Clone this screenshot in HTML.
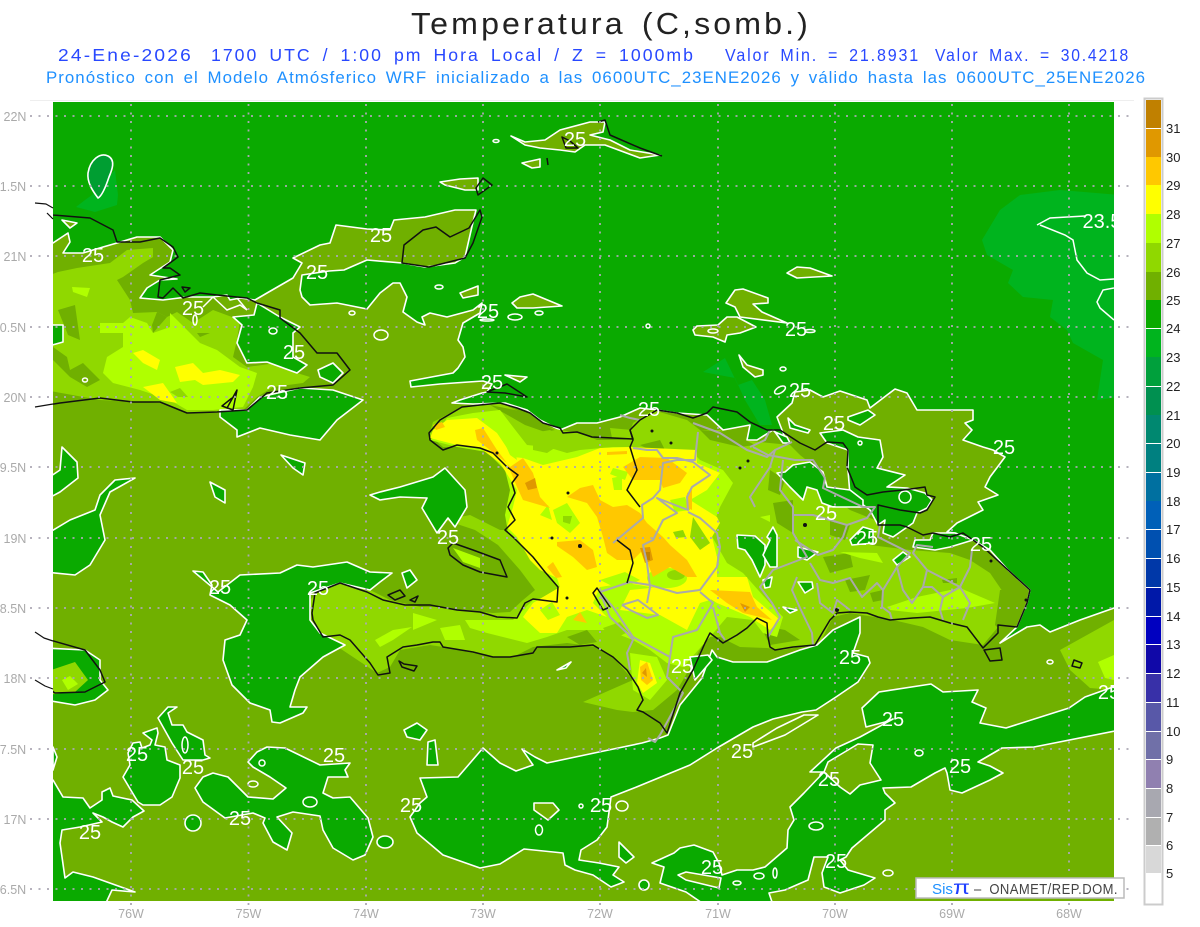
<!DOCTYPE html>
<html lang="es"><head><meta charset="utf-8"><title>Temperatura</title>
<style>
html,body{margin:0;padding:0;background:#fff}
svg{display:block;font-family:"Liberation Sans",sans-serif}
.o{fill:#70b000;stroke:#fff;stroke-width:1.6;stroke-linejoin:round}
.g{fill:#0aaa00;stroke:#fff;stroke-width:1.6;stroke-linejoin:round}
.r{fill:none;stroke:#fff;stroke-width:1.5}
.a{fill:#90d800}.b{fill:#b0ff00}.c{fill:#ffff00}.d{fill:#ffc800}.e{fill:#e09800}.f{fill:#c08000}.q{fill:#70b000}
.k{fill:none;stroke:#111;stroke-width:1.5;stroke-linejoin:round}
.y{fill:none;stroke:#aaa;stroke-width:2;stroke-linejoin:round}
.l text{fill:#fff;font-size:20px;text-anchor:middle}
.t text{fill:#aaa;font-size:12.5px;text-anchor:middle}
.n text{fill:#222;font-size:13px}
</style></head><body>
<svg width="1200" height="927" viewBox="0 0 1200 927" xmlns="http://www.w3.org/2000/svg">
<defs><clipPath id="m"><rect x="53" y="102" width="1061" height="799"/></clipPath></defs>
<rect width="1200" height="927" fill="#fff"/>
<text x="411" y="34" font-size="31" fill="#222" letter-spacing="3" word-spacing="4" textLength="400" lengthAdjust="spacingAndGlyphs">Temperatura (C,somb.)</text>
<g fill="#2848ff" font-size="17.5" letter-spacing="2" word-spacing="4">
<text x="58" y="61" textLength="135" lengthAdjust="spacingAndGlyphs">24-Ene-2026</text>
<text x="211" y="61" textLength="484" lengthAdjust="spacingAndGlyphs">1700 UTC / 1:00 pm Hora Local / Z = 1000mb</text>
<text x="725" y="61" textLength="195" lengthAdjust="spacingAndGlyphs">Valor Min. = 21.8931</text>
<text x="935" y="61" textLength="195" lengthAdjust="spacingAndGlyphs">Valor Max. = 30.4218</text>
</g>
<text x="46" y="83" font-size="16.5" fill="#1e90ff" letter-spacing="1" word-spacing="3" textLength="1100" lengthAdjust="spacingAndGlyphs">Pronóstico con el Modelo Atmósferico WRF inicializado a las 0600UTC_23ENE2026 y válido hasta las 0600UTC_25ENE2026</text>
<line x1="30" y1="100.5" x2="1134" y2="100.5" stroke="#eee"/>
<g clip-path="url(#m)">
<rect x="53" y="102" width="1061" height="799" fill="#0aaa00"/>
<polygon fill="#00b41e" points="982,240 1000,210 1020,195 1060,190 1120,195 1120,397 1097,400 1103,360 1073,343 1067,330 1050,317 1053,300 1023,297 1008,283 1013,270 987,255"/>
<polygon fill="#00b41e" points="76,207 85,200 92,195 115,170 118,195 117,205 95,212"/>
<polygon fill="#00b41e" points="703,372 725,358 738,385 752,380 765,400 772,425 760,425 745,400 735,378"/>
<path class="g" style="fill:#009e32" d="M88,173 C90,160 100,152 108,156 C116,160 112,170 109,177 C106,186 102,196 98,198 C92,190 87,182 88,173Z"/>
<!-- main olive -->
<polygon class="o" points="40,243 53,243 68,233 70,242 63,253 83,253 103,247 117,243 137,237 160,237 173,250 170,262 150,275 177,279 160,280 147,288 140,298 163,300 187,297 213,297 227,295 230,300 240,298 255,300 267,293 293,278 302,263 293,258 320,245 330,243 336,225 367,229 390,230 394,220 425,217 455,210 476,210 473,222 465,257 455,263 425,267 402,263 367,260 344,270 329,271 302,275 300,290 302,297 310,305 337,303 367,309 380,293 393,283 400,283 407,297 403,312 417,322 425,325 422,317 430,313 447,317 473,310 482,303 480,313 463,323 458,340 463,347 465,357 458,368 453,373 410,381 411,387 440,384 483,381 492,384 487,392 482,393 460,400 452,403 473,404 505,403 527,410 540,420 560,430 577,423 597,423 620,417 640,408 657,410 677,413 707,415 723,430 750,425 747,440 757,440 773,430 787,443 777,417 792,403 795,392 810,390 823,397 840,391 867,400 870,408 895,389 907,393 917,410 973,410 973,420 965,423 972,430 963,440 983,447 993,450 1005,457 990,477 985,487 998,495 978,502 983,510 957,523 947,532 955,533 973,540 990,550 1008,570 1030,590 1027,603 1017,627 1000,643 1027,627 1040,625 1050,632 1080,620 1114,608 1130,608 1130,915 40,915"/>
<!-- Cuba layers -->
<polygon class="a" points="45,390 45,277 58,272 77,268 110,263 127,250 153,248 153,257 143,263 123,277 117,280 130,300 133,313 157,312 167,317 177,312 193,323 213,310 240,320 237,340 233,357 247,367 277,363 297,373 310,377 303,383 273,387 257,397 240,413 187,413 160,403 100,400"/>
<polygon class="q" points="53,347 67,357 70,370 83,363 100,380 87,387 70,377 53,360"/>
<polygon class="q" points="58,310 75,305 80,340 68,335"/>
<polygon class="q" points="153,333 167,317 157,312 152,325"/>
<polygon class="q" points="197,333 210,333 200,337"/>
<polygon class="b" points="100,323 123,323 130,317 147,323 153,333 170,327 170,313 187,330 200,343 217,350 240,367 257,373 253,387 243,407 213,410 187,410 170,400 140,390 113,383 103,373 107,357 123,347 123,333 100,333"/>
<polygon class="b" points="72,287 90,288 87,297 73,292"/>
<polygon class="c" points="133,353 143,350 160,360 157,370 143,363"/>
<polygon class="c" points="175,367 193,363 203,373 220,370 240,375 233,382 203,385 195,380 180,382"/>
<polygon class="c" points="143,387 163,383 177,403 160,400"/>
<polygon class="a" points="170,392 180,388 188,397 178,397"/>
<!-- Hispaniola layers -->
<polygon class="a" points="429,435 433,422 460,408 500,403 523,413 540,425 560,430 580,433 597,440 627,440 633,423 653,410 663,413 687,420 700,430 720,430 740,440 760,442 790,445 800,455 825,475 830,495 850,510 875,520 880,530 870,545 910,550 950,553 970,560 990,573 1005,595 1010,613 993,633 983,645 950,640 923,627 893,620 850,613 833,617 820,643 783,650 767,648 740,647 720,637 707,637 683,680 677,690 653,710 633,712 617,710 583,702 617,687 633,680 613,657 597,647 567,643 533,647 513,657 493,657 443,647 430,645 400,650 390,667 377,673 347,653 323,637 312,620 310,600 323,587 347,583 370,590 390,600 420,607 440,607 460,610 493,613 510,612 523,600 535,590 520,570 498,545 475,530 445,520 470,515 500,530 512,530 515,507 513,477 493,453 467,447 443,447"/>
<polygon class="q" points="490,405 525,412 540,424 555,430 545,432 525,425"/>
<polygon class="q" points="700,430 730,432 755,445 740,447 710,440"/>
<polygon class="q" points="823,557 850,553 853,567 830,573"/>
<polygon class="q" points="870,593 883,590 883,600 873,602"/>
<polygon class="q" points="942,580 957,578 957,583 943,583"/>
<polygon class="q" points="773,503 793,500 793,533 777,523"/>
<polygon class="q" points="830,520 850,525 845,540 830,535"/>
<polygon class="q" points="845,580 870,575 865,590 850,592"/>
<polygon class="q" points="1000,590 1012,590 1012,615 1000,630 995,625"/>
<polygon class="q" points="760,625 785,630 800,640 770,645"/>
<polygon class="q" points="770,470 785,480 780,495 768,490"/>
<polygon class="q" points="640,445 660,440 665,450 650,450"/>
<polygon class="q" points="553,453 563,453 560,460"/>
<polygon class="q" points="567,637 587,630 597,642 580,645"/>
<polygon class="b" points="437,433 447,418 473,413 500,410 513,427 527,445 547,447 567,453 580,450 613,447 630,447 643,450 667,453 690,450 700,460 723,470 733,483 720,507 710,533 727,563 743,573 767,600 783,617 777,637 763,633 753,620 727,617 710,637 683,667 667,663 650,650 633,640 607,630 567,630 547,637 527,643 487,633 470,628 465,620 493,620 513,620 533,600 560,600 557,585 545,570 527,552 508,532 505,515 510,490 505,470 487,452 457,447 430,440"/>
<polygon class="b" points="887,607 917,597 960,588 995,603 967,608 917,613 890,610"/>
<polygon class="b" points="840,552 877,553 883,563 860,558"/>
<polygon class="b" points="375,640 393,630 412,627 393,640 380,647"/>
<polygon class="b" points="413,613 437,620 413,630"/>
<polygon class="b" points="440,628 460,625 465,640 445,640"/>
<polygon class="b" points="453,548 480,558 480,568 463,562"/>
<polygon class="b" points="630,653 657,657 667,680 650,700 633,690"/>
<polygon class="b" points="760,517 770,515 770,522"/>
<polygon class="a" points="533,433 550,430 567,440 547,453 533,450"/>
<polygon class="a" points="610,428 632,430 627,440 612,438"/>
<polygon class="c" points="430,438 433,430 447,420 477,418 497,433 513,457 523,458 543,465 577,457 600,448 630,447 697,450 697,463 720,473 707,490 690,500 717,517 720,523 712,537 717,557 717,577 747,577 753,597 780,620 770,630 750,617 717,603 697,590 680,593 650,587 627,583 600,587 593,603 607,617 587,610 567,617 557,633 540,633 523,617 533,603 543,597 560,587 557,578 540,570 530,560 517,537 507,527 513,507 517,490 500,463 480,448 457,445"/>
<polygon class="c" points="620,610 660,615 687,630 700,603 720,597 700,588 650,588 630,590"/>
<polygon class="c" points="640,660 650,663 657,683 643,693 637,683"/>
<polygon class="b" points="500,433 510,430 517,460 510,455"/>
<polygon class="b" points="553,510 567,503 580,523 570,533 557,523"/>
<polygon class="a" points="563,516 572,516 570,524 563,522"/>
<polygon class="b" points="613,468 628,472 625,480 610,474"/>
<polygon class="b" points="612,478 622,476 622,490 614,490"/>
<ellipse class="b" cx="667" cy="578" rx="20" ry="10"/>
<ellipse class="a" cx="676" cy="575" rx="9" ry="5"/>
<polygon class="b" points="670,500 685,497 690,510 675,512"/>
<polygon class="b" points="540,515 548,505 552,520"/>
<polygon class="b" points="600,580 625,572 640,580 620,590"/>
<polygon class="b" points="540,610 552,602 560,615 548,620"/>
<polygon class="a" points="693,517 710,543 700,550 690,537"/>
<polygon class="a" points="673,532 683,530 686,537 676,538"/>
<polygon class="a" points="603,628 620,622 628,632 612,640"/>
<polygon class="d" points="475,430 483,428 497,450 510,467 523,458 533,473 540,497 550,508 523,500 517,487 507,463 477,440"/>
<polygon class="d" points="567,497 580,488 593,485 600,500 613,507 627,505 640,513 647,523 663,537 670,545 687,560 697,577 687,577 670,567 653,577 643,550 633,560 617,560 607,553 603,537 597,517 587,503"/>
<polygon class="d" points="557,542 580,540 593,550 597,567 587,570 573,557 557,546"/>
<polygon class="d" points="623,467 640,457 667,458 687,473 680,483 663,488 660,480 647,480 633,480"/>
<polygon class="d" points="687,493 692,490 692,510 686,507"/>
<polygon class="d" points="710,590 750,592 757,607 772,620 760,617 743,613 727,603"/>
<polygon class="d" points="573,620 580,612 587,623"/>
<polygon class="d" points="547,567 553,562 562,577 556,578"/>
<polygon class="d" points="640,667 647,662 653,680 647,685 641,680"/>
<polygon class="d" points="607,452 627,451 627,454 607,455"/>
<polygon class="d" points="433,425 442,422 445,427 436,430"/>
<polygon class="e" points="525,483 535,478 537,488 528,490"/>
<polygon class="e" points="640,548 650,547 653,560 645,563"/>
<polygon class="f" points="645,552 650,552 650,560 646,560"/>
<polygon class="e" points="740,603 750,607 745,612"/>
<polygon class="e" points="642,673 646,668 647,677"/>
<polygon class="e" points="578,544 582,546 578,548"/>
<polygon class="a" points="1060,650 1114,620 1114,690 1090,688 1070,670"/>
<polygon class="b" points="1098,662 1114,655 1114,680 1105,678"/>
<!-- sea/green blobs -->
<polygon class="g" points="717,657 733,662 767,662 800,650 817,645 833,630 860,617 860,633 853,653 868,657 870,663 858,682 836,697 816,710 802,712 773,719 753,727 717,748 690,765 634,788 611,797 607,827 597,840 581,850 579,860 599,863 619,867 613,875 624,882 611,887 593,875 575,870 565,865 563,853 524,849 500,864 480,868 443,855 417,833 410,817 420,803 427,797 420,778 458,777 483,748 500,763 516,771 533,765 522,749 535,757 547,763 599,752 642,743 660,738 668,735 680,705 702,678 712,650"/>
<polygon class="o" points="753,747 785,735 818,715 804,715 777,728 753,743"/>
<polygon class="g" points="1130,695 1113,687 1085,697 1069,708 1006,728 980,723 986,708 972,702 978,690 943,692 931,684 879,692 862,708 866,727 885,722 893,719 860,737 836,748 810,772 824,772 804,793 790,807 794,820 788,830 787,848 765,867 753,870 737,870 722,875 719,863 713,852 694,845 680,848 674,853 652,863 664,867 660,883 686,892 705,905 773,905 769,893 785,890 808,880 814,857 828,857 822,873 824,887 840,893 864,885 875,878 848,870 840,860 846,857 852,848 885,820 885,810 895,803 885,793 883,788 911,787 935,773 945,768 947,773 950,790 962,793 990,780 1003,773 990,766 978,762 1002,748 1034,747 1130,728"/>
<polygon class="o" points="828,762 858,744 873,745 870,763 881,780 860,785 850,794 840,787 824,772"/>
<polygon class="o" points="678,875 686,872 721,878 719,888 686,880"/>
<polygon class="o" points="534,803 553,803 559,810 548,820 534,810"/>
<polygon class="g" points="619,842 634,857 626,863 619,857"/>
<polygon class="g" points="45,780 53,780 63,797 83,798 90,808 102,800 102,792 110,788 113,796 132,800 144,811 133,817 123,827 112,822 103,817 93,813 102,822 80,827 62,830 60,843 65,878 73,872 93,877 135,892 112,890 105,905 45,905"/>
<polygon class="g" points="53,747 57,757 53,770"/>
<polygon class="g" points="123,777 130,765 128,753 133,743 140,742 142,748 150,745 152,740 143,733 157,728 158,733 155,745 165,747 167,760 180,765 180,778 172,797 160,805 143,805 138,802"/>
<polygon class="g" points="158,718 168,707 177,707 168,713 172,725 183,725 187,732 203,740 205,755 210,758 203,760 183,760 172,743"/>
<polygon class="g" points="195,788 203,777 213,773 228,777 243,792 248,797 273,799 286,788 270,777 253,767 248,762 257,752 267,747 285,748 320,765 350,763 345,770 348,777 328,777 323,793 333,798 350,797 368,818 373,837 365,855 353,860 333,848 323,830 320,816 293,812 277,817 292,833 287,850 273,842 263,823 265,818 253,813 225,818 203,802"/>
<polygon class="g" points="193,571 203,572 212,585 210,595 230,605 247,620 240,635 225,640 223,660 232,685 237,690 250,703 270,710 272,722 280,723 303,713 307,707 290,707 295,690 300,677 323,657 345,645 320,633 310,620 310,593 340,583 370,590 380,582 392,573 370,572 347,562 313,567 297,565 280,573 240,575 218,592"/>
<polygon class="g" points="220,410 247,410 260,397 300,388 333,390 363,400 350,410 337,420 320,440 290,435 260,428 237,437 237,430 220,417"/>
<polygon class="g" points="400,487 433,477 445,468 465,490 467,507 455,527 448,518 437,533 422,508 427,498 400,497 380,500 370,495 380,492"/>
<polygon class="g" points="281,455 305,463 303,475 293,468"/>
<polygon class="g" points="210,482 225,490 225,503 215,497"/>
<polygon class="g" points="62,447 77,462 78,478 60,492 45,500 45,480 60,470"/>
<polygon class="g" points="135,478 110,492 100,515 105,540 90,565 75,575 45,572 45,535 70,520 95,510 100,495 115,480"/>
<polygon class="g" points="45,648 85,650 100,660 100,680 108,690 95,700 75,705 45,700"/>
<polygon class="a" points="45,672 75,662 88,680 75,692 45,695"/>
<polygon class="b" points="62,680 70,676 78,684 68,690"/>
<polygon class="g" points="45,325 63,325 63,342 45,347"/>
<polygon class="g" points="254,315 233,317 242,325 237,343 247,363 267,362 297,373 307,365 293,357 293,333 300,327 280,317 257,303"/>
<polygon class="g" points="318,370 333,363 343,373 333,383 320,377"/>
<polygon class="g" points="402,573 410,570 417,580 407,588"/>
<polygon class="g" points="404,730 417,723 427,730 420,740 407,737"/>
<polygon class="g" points="428,742 435,740 438,765 427,765"/>
<polygon class="g" points="690,657 708,655 712,660 695,680"/>
<polygon class="g" points="557,670 571,662 566,668"/>
<ellipse class="g" cx="193" cy="823" rx="8" ry="8"/>
<ellipse class="g" cx="385" cy="842" rx="8" ry="6"/>
<ellipse class="g" cx="644" cy="885" rx="5" ry="5"/>
<!-- NE DR greens -->
<polygon class="g" points="820,433 843,430 858,437 880,440 883,457 877,468 905,475 887,487 907,488 925,493 932,500 927,508 917,513 913,523 893,537 883,533 885,520 878,525 870,510 850,495 848,470 848,450 827,443"/>
<polygon class="g" points="793,465 810,462 823,472 827,487 850,490 863,500 863,507 833,507 822,503 817,490 807,487 803,500 790,487 777,473 785,472"/>
<polygon class="g" points="848,417 868,410 875,415 860,425 848,420"/>
<polygon class="g" points="788,418 795,425 810,430 808,433 790,428"/>
<polygon class="g" points="775,432 787,437 790,443 783,443"/>
<polygon class="g" points="737,535 755,536 765,545 765,565 760,577 752,560 745,550 738,548"/>
<polygon class="g" points="767,537 773,527 777,535 777,567 770,567 763,555 770,540"/>
<polygon class="g" points="763,580 772,577 770,587 765,588"/>
<polygon class="g" points="798,547 818,552 807,560 798,557"/>
<polygon class="g" points="798,582 812,582 813,588 805,593"/>
<polygon class="g" points="783,607 797,610 790,613"/>
<polygon class="g" points="850,540 863,527 873,530 873,543 852,545"/>
<polygon class="g" points="893,560 903,552 910,557 897,565"/>
<polygon class="g" points="913,547 935,550 950,547 973,540 955,533 933,533 930,540 915,540"/>
<!-- olive islands -->
<polygon class="o" points="511,136 525,142 545,140 560,130 590,122 605,122 603,132 590,135 610,140 630,150 660,155 640,158 605,145 585,145 575,152 560,150 540,148 525,145"/>
<polygon class="o" points="522,163 540,159 540,167 532,168"/>
<polygon class="o" points="440,182 460,179 478,178 478,190 465,190 445,185"/>
<polygon class="o" points="512,303 520,297 533,294 562,306 533,308 517,308"/>
<polygon class="o" points="505,375 527,377 520,382"/>
<polygon class="o" points="460,293 478,286 478,295 463,298"/>
<polygon class="o" points="787,273 797,267 810,268 832,276 797,278"/>
<polygon class="o" points="726,303 735,290 743,289 768,298 768,303 753,304 762,312 787,323 740,317 735,307"/>
<polygon class="o" points="693,330 697,326 718,325 727,317 737,317 756,327 740,333 727,335 725,342 713,337 695,335"/>
<polygon class="o" points="739,355 747,365 763,370 763,375 755,377 743,367"/>
<polygon class="o" points="62,220 77,223 70,228"/>
<g class="r">
<ellipse cx="496" cy="141" rx="3" ry="1.5"/><ellipse cx="515" cy="317" rx="7" ry="3"/><ellipse cx="439" cy="287" rx="4" ry="2"/><ellipse cx="352" cy="313" rx="3" ry="2"/><ellipse cx="539" cy="313" rx="4" ry="2"/><ellipse cx="487" cy="320" rx="7" ry="1"/>
<ellipse cx="381" cy="335" rx="7" ry="5"/><ellipse cx="273" cy="331" rx="4" ry="3"/><ellipse cx="195" cy="320" rx="2" ry="5"/><ellipse cx="85" cy="380" rx="2.5" ry="2"/>
<ellipse cx="780" cy="390" rx="6" ry="3" transform="rotate(-30 780 390)"/><ellipse cx="783" cy="369" rx="3" ry="2"/><ellipse cx="648" cy="326" rx="2" ry="2"/><ellipse cx="713" cy="331" rx="5" ry="2"/><ellipse cx="810" cy="331" rx="5" ry="1.5"/>
<ellipse cx="310" cy="802" rx="7" ry="5"/><ellipse cx="253" cy="784" rx="5" ry="3"/><ellipse cx="262" cy="763" rx="3" ry="3"/><ellipse cx="185" cy="745" rx="3" ry="8"/>
<ellipse cx="581" cy="806" rx="2" ry="2"/><ellipse cx="622" cy="806" rx="6" ry="5"/><ellipse cx="539" cy="830" rx="3.5" ry="5"/><ellipse cx="737" cy="883" rx="4" ry="2"/><ellipse cx="759" cy="876" rx="5" ry="3"/><ellipse cx="775" cy="873" rx="2" ry="5"/>
<ellipse cx="816" cy="826" rx="7" ry="4"/><ellipse cx="919" cy="753" rx="4" ry="3"/><ellipse cx="888" cy="873" rx="5" ry="3"/><ellipse cx="1050" cy="662" rx="3" ry="2"/>
<polyline points="1037,225 1050,218 1085,216"/><polyline points="1040,225 1065,235 1073,240 1077,260 1087,273 1100,280 1114,279"/><polyline points="1114,288 1103,290 1097,302 1100,308 1114,320"/>
<ellipse cx="905" cy="497" rx="6" ry="6"/><ellipse cx="860" cy="443" rx="2" ry="2"/>
<polyline points="203,307 213,297 227,310 240,305 247,310 237,298"/>
</g>
<!-- grey borders -->
<g class="y">
<polyline points="620,415 630,418 640,420"/>
<polyline points="693,423 720,433 747,450 767,457 775,450 792,442"/>
<polyline points="698,432 695,460 677,460 663,463 660,490 653,498 642,505 643,518 613,543"/>
<polyline points="633,448 647,450 657,450 663,458 677,458 693,462 710,475 692,487 687,497 688,510 657,498 677,513 663,520 653,540 643,545 647,563 650,587 647,603"/>
<polyline points="688,512 700,518 717,533 720,547 717,567 700,590 677,593 650,585 630,582 600,592 610,617 627,633 633,640 627,653 630,670"/>
<polyline points="700,592 713,603 697,630 673,637 670,657 633,637 613,607 600,592"/>
<polyline points="622,605 638,600 658,615 647,618 630,610 622,605"/>
<polyline points="713,607 720,633 725,640"/>
<polyline points="670,657 667,677 683,693 660,735 655,742 648,738"/>
<polyline points="775,450 770,467 750,497 755,507"/>
<polyline points="783,460 780,490 793,507 793,533 807,557 773,570 760,587 772,603 780,617 768,637"/>
<polyline points="753,447 768,455 795,460 813,460 825,478 823,488 863,507 875,507 867,518 847,525 830,520 813,515 793,515"/>
<polyline points="795,540 818,555 833,550 843,537 847,525"/>
<polyline points="810,563 820,580 833,583 850,578 862,597 877,583 883,590 897,567 910,553 878,537 880,525"/>
<polyline points="883,590 882,607 890,613 892,620"/>
<polyline points="897,567 903,590 912,603 923,587 927,570 913,553 917,545 933,547"/>
<polyline points="923,587 932,587 943,597 940,610 943,620"/>
<polyline points="927,570 960,587 970,567 972,550"/>
<polyline points="960,587 970,603 963,620"/>
<polyline points="943,597 960,587"/>
<polyline points="817,583 820,603 833,613 837,600 850,610"/>
<polyline points="797,577 792,590 800,608 812,633 813,645"/>
<polyline points="750,447 765,440 770,430"/>
</g>
<!-- coast -->
<g class="k">
<polygon points="429,433 440,420 462,407 480,405 500,403 517,408 530,413 543,423 560,428 563,433 577,432 592,437 613,438 633,439 630,430 640,420 657,410 677,413 693,418 707,413 713,407 737,412 750,422 767,430 780,430 800,443 815,450 827,442 843,443 848,450 847,467 855,487 867,495 883,492 903,490 918,488 925,487 927,495 935,497 927,510 920,513 900,510 878,505 878,525 900,525 907,527 923,535 933,533 950,537 963,533 983,547 1008,570 1030,590 1027,603 1017,627 998,625 998,633 983,648 967,627 950,623 930,617 913,618 890,620 878,617 867,613 850,612 837,613 830,620 815,645 793,647 775,650 770,647 768,637 767,623 757,618 747,628 737,635 723,643 710,633 705,643 693,670 680,693 667,733 660,723 643,712 637,710 643,700 638,687 627,670 613,657 593,645 570,647 537,647 533,653 510,657 493,657 473,652 443,647 440,642 433,642 417,645 403,647 387,657 390,673 378,675 370,663 350,640 340,635 323,637 313,620 312,613 315,593 340,583 367,592 383,600 405,605 430,605 457,610 480,612 497,617 517,618 525,603 533,599 557,602 558,587 545,572 533,557 513,537 505,530 515,520 508,507 515,493 512,483 518,475 507,467 493,453 480,448 457,445 443,450 430,440"/>
<polygon points="448,548 453,543 473,550 500,560 507,577 480,572 463,565 450,555"/>
<polygon points="487,392 507,384 527,397 505,393"/>
<polyline points="630,430 633,440 630,447 637,470 627,490 640,507"/>
<polyline points="617,540 630,550 633,563 627,583"/>
<polygon points="597,588 610,607 603,610 593,593"/>
<polygon points="35,407 60,403 100,398 133,402 160,402 187,413 217,412 247,410 267,393 300,388 333,385 350,370 337,353 317,353 300,333 280,318 280,310 257,303 247,298 217,295 200,293 183,298 173,288 163,298 158,297 160,280 180,275 170,268 163,268 178,257 173,247 160,238 140,242 117,242 113,230 90,218 53,215 47,213" fill="none"/>
<polygon points="182,287 190,288 185,292"/>
<polyline points="227,408 237,390 233,410 222,406 232,398"/>
<polygon points="402,263 404,245 423,230 436,227 450,237 469,228 480,210 482,217 473,243 465,258 429,267"/>
<polygon points="483,178 492,185 478,195 476,188"/>
<polyline points="547,158 548,165"/>
<polygon points="562,137 566,148 578,148 570,141"/>
<polyline points="598,122 605,120 610,135 640,148 662,156"/>
<polyline points="35,632 50,640 85,650 100,670 105,682 85,692 55,693 35,680"/>
<polygon points="399,661 402,667 414,671 417,666 404,664"/>
<polygon points="388,595 400,590 405,596 395,600"/>
<polygon points="410,600 418,596 415,602"/>
<polygon points="984,650 1000,648 1002,660 990,661"/>
<polygon points="1074,660 1082,663 1080,668 1072,666" fill="none"/>
</g>
<g fill="#111"><circle cx="497" cy="453" r="1.5"/><circle cx="568" cy="493" r="1.5"/><circle cx="552" cy="538" r="1.5"/><circle cx="580" cy="546" r="2"/><circle cx="567" cy="598" r="1.5"/><circle cx="671" cy="443" r="1.5"/><circle cx="652" cy="431" r="1.5"/><circle cx="740" cy="468" r="1.5"/><circle cx="748" cy="461" r="1.5"/><circle cx="805" cy="525" r="2"/><circle cx="837" cy="610" r="2"/><circle cx="991" cy="561" r="1.5"/><circle cx="1026" cy="600" r="1.5"/></g>
</g>
<!-- coast stubs outside the map frame -->
<g class="k" style="stroke-width:1.2">
<polyline points="35,203 46,204 53,208"/>
<polyline points="47,213 53,219"/>
<polyline points="35,407 53,404"/>
<polyline points="35,632 44,638 53,641"/>
<polyline points="35,680 45,686 53,689"/>
</g>
<!-- grid -->
<path fill="none" stroke="#aca8b4" stroke-width="1.8" stroke-dasharray="2 6.5" d="M30 116H1134M30 186H1134M30 256H1134M30 327H1134M30 397H1134M30 467H1134M30 538H1134M30 608H1134M30 678H1134M30 749H1134M30 819H1134M30 889H1134M131 104V905M248.500 104V905M366 104V905M483 104V905M600 104V905M718 104V905M835 104V905M952 104V905M1069 104V905"/>
<g clip-path="url(#m)"><g class="l">
<text x="93" y="262">25</text><text x="381" y="242">25</text><text x="317" y="279">25</text><text x="575" y="146">25</text><text x="193" y="315">25</text><text x="294" y="359">25</text><text x="277" y="399">25</text><text x="488" y="318">25</text><text x="492" y="389">25</text><text x="649" y="416">25</text><text x="800" y="397">25</text><text x="796" y="336">25</text><text x="834" y="430">25</text><text x="1004" y="454">25</text><text x="826" y="520">25</text><text x="867" y="545">25</text><text x="981" y="551">25</text><text x="448" y="544">25</text><text x="220" y="594">25</text><text x="318" y="595">25</text><text x="682" y="673">25</text><text x="850" y="664">25</text><text x="1109" y="699">25</text><text x="893" y="726">25</text><text x="742" y="758">25</text><text x="137" y="761">25</text><text x="334" y="762">25</text><text x="193" y="774">25</text><text x="960" y="773">25</text><text x="829" y="786">25</text><text x="411" y="812">25</text><text x="601" y="812">25</text><text x="240" y="825">25</text><text x="90" y="839">25</text><text x="712" y="874">25</text><text x="836" y="868">25</text><text x="1102" y="228">23.5</text>
</g></g>
<g class="t">
<text x="15" y="121">22N</text><text x="13" y="191">1.5N</text><text x="15" y="261">21N</text><text x="13" y="332">0.5N</text><text x="15" y="402">20N</text><text x="13" y="472">9.5N</text><text x="15" y="543">19N</text><text x="13" y="613">8.5N</text><text x="15" y="683">18N</text><text x="13" y="754">7.5N</text><text x="15" y="824">17N</text><text x="13" y="894">6.5N</text>
<text x="131" y="918">76W</text><text x="248.500" y="918">75W</text><text x="366" y="918">74W</text><text x="483" y="918">73W</text><text x="600" y="918">72W</text><text x="718" y="918">71W</text><text x="835" y="918">70W</text><text x="952" y="918">69W</text><text x="1069" y="918">68W</text>
</g>
<!-- footer box -->
<rect x="916" y="878" width="208" height="20" fill="#fff" stroke="#bbb" stroke-width="1.5"/>
<text x="932" y="894" font-size="15" fill="#1e90ff" textLength="21" lengthAdjust="spacingAndGlyphs">Sis</text>
<text x="953" y="894" font-size="19" fill="#2040ff" textLength="17" lengthAdjust="spacingAndGlyphs">π</text>
<text x="974" y="894" font-size="14.500" fill="#444" letter-spacing="0.5" word-spacing="4" textLength="144" lengthAdjust="spacingAndGlyphs">– ONAMET/REP.DOM.</text>
<!-- colour bar -->
<rect x="1144.500" y="98.500" width="18" height="806" fill="#fff" stroke="#ccc" stroke-width="2"/>
<g shape-rendering="crispEdges">
<rect x="1146" y="100" width="15" height="28" fill="#c08000"/><rect x="1146" y="129" width="15" height="28" fill="#e09800"/><rect x="1146" y="157" width="15" height="28" fill="#ffc800"/><rect x="1146" y="185" width="15" height="29" fill="#ffff00"/><rect x="1146" y="214" width="15" height="29" fill="#b0ff00"/><rect x="1146" y="243" width="15" height="29" fill="#90d800"/><rect x="1146" y="272" width="15" height="28" fill="#70b000"/><rect x="1146" y="300" width="15" height="28" fill="#0aaa00"/><rect x="1146" y="329" width="15" height="28" fill="#00b41e"/><rect x="1146" y="357" width="15" height="29" fill="#00a03c"/><rect x="1146" y="387" width="15" height="28" fill="#009050"/><rect x="1146" y="415" width="15" height="28" fill="#008870"/><rect x="1146" y="444" width="15" height="28" fill="#008080"/><rect x="1146" y="473" width="15" height="28" fill="#0070a0"/><rect x="1146" y="501" width="15" height="28" fill="#0060b8"/><rect x="1146" y="530" width="15" height="28" fill="#0050b0"/><rect x="1146" y="559" width="15" height="28" fill="#0038a8"/><rect x="1146" y="588" width="15" height="28" fill="#0018a8"/><rect x="1146" y="617" width="15" height="27" fill="#0000c0"/><rect x="1146" y="645" width="15" height="28" fill="#1008a8"/><rect x="1146" y="674" width="15" height="28" fill="#3830a8"/><rect x="1146" y="703" width="15" height="28" fill="#5858a8"/><rect x="1146" y="732" width="15" height="27" fill="#7070a8"/><rect x="1146" y="760" width="15" height="28" fill="#9080b0"/><rect x="1146" y="789" width="15" height="28" fill="#a8a8b0"/><rect x="1146" y="818" width="15" height="27" fill="#b0b0b0"/><rect x="1146" y="846" width="15" height="27" fill="#d8d8d8"/><rect x="1146" y="874" width="15" height="29" fill="#fff"/>
</g>
<g class="n">
<text x="1166" y="133">31</text><text x="1166" y="162">30</text><text x="1166" y="190">29</text><text x="1166" y="219">28</text><text x="1166" y="248">27</text><text x="1166" y="277">26</text><text x="1166" y="305">25</text><text x="1166" y="333">24</text><text x="1166" y="362">23</text><text x="1166" y="391">22</text><text x="1166" y="420">21</text><text x="1166" y="448">20</text><text x="1166" y="477">19</text><text x="1166" y="506">18</text><text x="1166" y="534">17</text><text x="1166" y="563">16</text><text x="1166" y="592">15</text><text x="1166" y="621">14</text><text x="1166" y="649">13</text><text x="1166" y="678">12</text><text x="1166" y="707">11</text><text x="1166" y="736">10</text><text x="1166" y="764">9</text><text x="1166" y="793">8</text><text x="1166" y="822">7</text><text x="1166" y="850">6</text><text x="1166" y="878">5</text>
</g>
</svg>
</body></html>
